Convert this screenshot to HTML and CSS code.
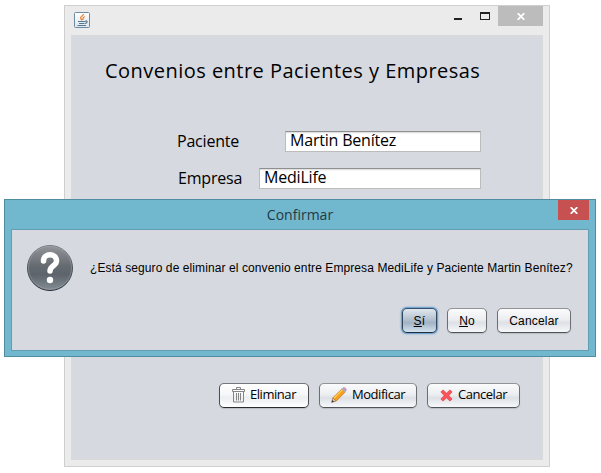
FILE: index.html
```html
<!DOCTYPE html>
<html lang="es">
<head>
<meta charset="utf-8">
<title>Convenios</title>
<link rel="stylesheet" href="styles.css">
</head>
<body>
<main class="window">
  <header class="titlebar">
    <svg class="java" width="16" height="16" viewBox="0 0 16 16">
      <defs><linearGradient id="jv" x2="0" y2="1"><stop stop-color="#fff"/><stop offset="1" stop-color="#dde5eb"/></linearGradient></defs>
      <rect x=".5" y=".5" width="15" height="15" rx="1" fill="url(#jv)" stroke="#6b8ca3"/>
      <path d="M9.500 2C9.500 4 6 4.500 6.500 6.200L8 8.300M10.800 4.500C8.300 5.500 8.800 6.500 9 8" fill="none" stroke="#e8893d" stroke-width="1.300"/>
      <path d="M4 9.500h7.500M5 11.500h5.500M3.500 13.500h8.500M11.500 9c2-.6 2.500 1.500-.5 2.500" fill="none" stroke="#56788f" stroke-width="1.200"/>
    </svg>
    <div class="controls">
      <span class="minimize"></span>
      <span class="maximize"></span>
      <span class="close"><svg width="8" height="7" viewBox="0 0 8 7"><path d="M.7 .2L7.300 6.800M7.300 .2L.7 6.800" stroke="#fff" stroke-width="1.800"/></svg></span>
    </div>
  </header>
  <section class="client">
    <h1><span>Convenios entre Pacientes y Empresas</span></h1>
    <div class="row"><label class="label-patient">Paciente</label><div class="field patient">Martin Benítez</div></div>
    <div class="row"><label class="label-company">Empresa</label><div class="field company">MediLife</div></div>
    <div class="actions">
      <button class="btn delete">
        <svg width="13" height="16" viewBox="0 0 13 16" fill="none" stroke="#858585"><path d="M.5 4.500v-2h12v2zM4.500 2V.5h4V2M1.500 4.500v10.500h10V4.500M4.500 6v7.500M6.500 6v7.500M8.500 6v7.500"/></svg>
        <span>Eliminar</span></button>
      <button class="btn edit">
        <svg width="16" height="16" viewBox="0 0 16 16"><path d="M.7 15.300L2 10.700 5.300 14z" fill="#e8c79a" stroke="#8b6746" stroke-width=".7"/><path d="M.6 15.400l.7-2.300 1.600 1.600z" fill="#333"/><path d="M2 10.700L10.800 2 14 5.200 5.300 14z" fill="#f6a01d" stroke="#bd7421" stroke-width=".7"/><path d="M3 11.100L11.300 2.900" stroke="#ffd35e" stroke-width="1.200"/><path d="M10.800 2l1-1 3.200 3.200-1 1z" fill="#aab5bd"/><path d="M11.800 1q1.500-1 2.700.3t.5 2.900z" fill="#d994c5" stroke="#a579a8" stroke-width=".5"/></svg>
        <span>Modificar</span></button>
      <button class="btn cancel">
        <svg width="13" height="13" viewBox="0 0 14 14"><path d="M1 3.200L3.200 1 7 4.500 10.800 1 13 3.200 9.500 7 13 10.800 10.800 13 7 9.500 3.200 13 1 10.800 4.500 7z" fill="#fa5558" stroke="#e83d43" stroke-width=".8" stroke-linejoin="round"/></svg>
        <span>Cancelar</span></button>
    </div>
  </section>
</main>
<section class="dialog">
  <header class="dialog-title">
    <h2><span>Confirmar</span></h2>
    <span class="dialog-close"><svg width="8" height="7" viewBox="0 0 8 7"><path d="M.7 .2L7.300 6.800M7.300 .2L.7 6.800" stroke="#fff" stroke-width="1.800"/></svg></span>
  </header>
  <div class="dialog-body">
    <div class="message">
      <svg width="48" height="48" viewBox="0 0 48 48">
        <defs><linearGradient id="qg" x2="0" y2="1"><stop stop-color="#92959a"/><stop offset=".45" stop-color="#666b72"/><stop offset=".65" stop-color="#5d646c"/><stop offset="1" stop-color="#858d95"/></linearGradient>
        <linearGradient id="qs" x2="0" y2="1"><stop stop-color="#77797d"/><stop offset="1" stop-color="#262d38"/></linearGradient></defs>
        <circle cx="24" cy="24" r="22.500" fill="url(#qg)" stroke="url(#qs)"/>
        <circle cx="24" cy="23.800" r="21.500" fill="none" stroke="#b5babf" stroke-opacity=".35"/>
        <path d="M17.500 17C17.500 8.800 30.500 8.800 30.500 17C30.500 22 24 21.500 24 27" fill="none" stroke="#fff" stroke-width="5.500" stroke-linecap="round"/>
        <circle cx="24" cy="36" r="3.200" fill="#fff"/>
      </svg>
      <p><span>¿Está seguro de eliminar el convenio entre Empresa MediLife y Paciente Martin Benítez?</span></p>
    </div>
    <div class="dialog-actions">
      <button class="btn yes"><span><u>S</u>í</span></button>
      <button class="btn no"><span><u>N</u>o</span></button>
      <button class="btn dismiss"><span>Cancelar</span></button>
    </div>
  </div>
</section>
</body>
</html>
```

FILE: styles.css
```css
* { box-sizing: border-box; }
body { margin: 0; width: 601px; height: 473px; overflow: hidden; background: #fff; color: #000; font-family: "Open Sans", "Noto Sans", sans-serif; }
h1, h2, p { margin: 0; font-weight: 400; white-space: nowrap; }
.window { position: absolute; left: 64px; top: 5px; width: 486px; height: 462px; padding: 0 6px 6px; background: #ebebeb; border: 1px solid #cfcfcf; }
.titlebar { display: flex; justify-content: space-between; height: 29px; }
.java { margin: 6px 0 0 3px; }
.controls { display: flex; }
.minimize { width: 8px; height: 2px; margin: 12px 18px 0 0; background: #222; }
.maximize { width: 10px; height: 8px; margin: 6px 8px 0 0; border: 1px solid #222; border-top-width: 2px; }
.close { display: flex; align-items: center; justify-content: center; width: 45px; height: 20px; background: #bcbcbc; }
.client { height: 425px; border: 1px solid #dadada; background: #d6d9e0; }
h1 { height: 95px; padding: 21px 0 0 33px; font-size: 20px; line-height: 28px; letter-spacing: .47px; }
.row { display: flex; justify-content: flex-end; height: 37px; padding-right: 61px; font-size: 16px; line-height: 20px; letter-spacing: -.2px; }
.field { height: 21px; border: 1px solid #bcbcbc; border-top-color: #8f8f8f; background: linear-gradient(#d8d8d8, #fff 2px); padding-left: 4px; line-height: 17px; white-space: nowrap; }
.patient { width: 196px; }
.company { width: 222px; }
.label-patient { width: 108px; }
.label-company { width: 81px; }
.actions { display: flex; gap: 10px; margin: 178px 0 0 147px; }
.btn { display: flex; align-items: center; justify-content: center; gap: 5px; height: 25px; padding: 0 0 1px; border: 1px solid; border-color: #919395 #6d6f72 #505356; border-radius: 5px; background: linear-gradient(#fbfbfc, #eceef1 45%, #dde0e5 60%, #f7f8fa); color: #000; font: 13px "Open Sans", "Noto Sans", sans-serif; letter-spacing: -.45px; box-shadow: 0 1px 1px #b9bdc4; white-space: nowrap; }
.actions .btn span { position: relative; top: -1px; }
.delete { width: 90px; background: linear-gradient(#fff, #f6f7f9 45%, #eceef1 60%, #fff); border-color: #74767a #4b4d50 #292b2e; }
.edit { width: 98px; }
.cancel { width: 93px; }
.dialog { position: absolute; left: 4px; top: 199px; width: 592px; height: 158px; padding: 0 6px; border: 1px solid #508ca0; background: #71b7ce; }
.dialog-title { display: flex; height: 29px; }
h2 { flex: 1; padding-left: 31px; text-align: center; font-size: 14px; line-height: 30px; color: #243a43; }
.dialog-close { display: flex; align-items: center; justify-content: center; width: 31px; height: 20px; background: #c75050; }
.dialog-body { height: 122px; border: 1px solid #639db1; background: #d6d9e0; }
.message { display: flex; height: 78px; padding: 14px 0 0 14px; }
.message p { padding: 16px 0 0 16px; font: 12px/16px "Liberation Sans", sans-serif; letter-spacing: .09px; }
.dialog-actions { display: flex; justify-content: flex-end; gap: 10px; padding-right: 17px; }
.dialog-actions .btn { padding: 1px 0 0; font: 12px "Liberation Sans", sans-serif; letter-spacing: .2px; }
.dialog-actions .yes { border-color: #37506a #31475e #202d3b; }
.yes { width: 35px; background: linear-gradient(#e0e7ee, #b4c2d0 45%, #a2b4c5 60%, #d2e1ed); box-shadow: 0 0 0 1px #73a4d1, 0 0 2px 1px #73a4d1; }
.no { width: 40px; }
.dismiss { width: 74px; }
```
